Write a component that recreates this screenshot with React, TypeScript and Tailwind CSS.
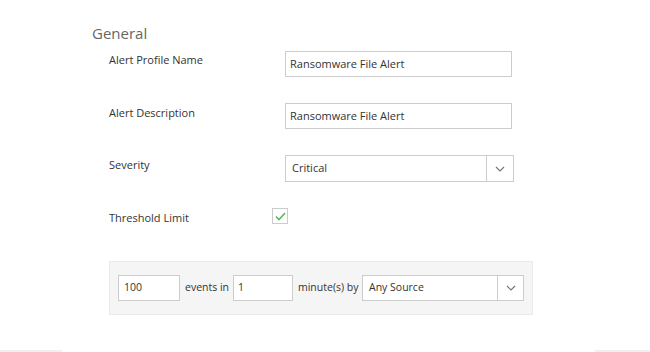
import React from "react";

const Chevron = () => (
  <svg width="10" height="6" viewBox="0 0 10 6" fill="none">
    <path d="M1 1l4 4 4-4" stroke="#777" strokeWidth="1.2" />
  </svg>
);

export default function App() {
  const font = { fontFamily: '"Open Sans", "Noto Sans", sans-serif' };
  return (
    <div className="w-[650px] h-[352px] bg-white relative overflow-hidden text-[#333]" style={font}>
      <div className="pt-[23px] pl-[92px]">
        <div className="text-[15px] leading-[20px] text-[#666]">General</div>
        <div className="pl-[17px] mt-[8px] flex flex-col gap-[26px]">
          <div className="flex items-start h-[26px]">
            <div className="w-[176px] text-[11px] leading-[14px] mt-[2px]">Alert Profile Name</div>
            <div className="w-[227px] h-[26px] border border-[#ccc] flex items-center px-[4px] text-[11px]">Ransomware File Alert</div>
          </div>
          <div className="flex items-start h-[26px]">
            <div className="w-[176px] text-[11px] leading-[14px] mt-[3px]">Alert Description</div>
            <div className="w-[227px] h-[26px] border border-[#ccc] flex items-center px-[4px] text-[11px]">Ransomware File Alert</div>
          </div>
          <div className="flex items-start h-[26px]">
            <div className="w-[176px] text-[11px] leading-[14px] mt-[3px]">Severity</div>
            <div className="w-[229px] h-[27px] border border-[#ccc] flex items-center text-[11px]">
              <div className="flex-1 px-[6px]">Critical</div>
              <div className="w-[27px] h-full border-l border-[#ccc] flex items-center justify-center"><Chevron /></div>
            </div>
          </div>
          <div className="flex items-start h-[26px]">
            <div className="w-[163px] text-[11px] leading-[14px] mt-[4px]">Threshold Limit</div>
            <div className="w-[16px] h-[16px] mt-[1px] border border-[#ccc] flex items-center justify-center">
              <svg width="11" height="9" viewBox="0 0 11 9" fill="none">
                <path d="M1 4.5l3 3L10 1" stroke="#5cb85c" strokeWidth="1.6" />
              </svg>
            </div>
          </div>
        </div>
        <div className="ml-[17px] mt-[28px] w-[424px] h-[54px] bg-[#f5f5f5] border border-[#ebebeb] flex items-center pl-[8px] text-[10.5px] whitespace-nowrap">
          <div className="shrink-0 w-[62px] h-[26px] bg-white border border-[#ccc] flex items-center px-[5px]">100</div>
          <div className="shrink-0 w-[53px] pl-[5px]">events in</div>
          <div className="shrink-0 w-[60px] h-[26px] bg-white border border-[#ccc] flex items-center px-[4px]">1</div>
          <div className="shrink-0 w-[69px] pl-[5px]">minute(s) by</div>
          <div className="shrink-0 w-[162px] h-[26px] bg-white border border-[#ccc] flex items-center">
            <div className="flex-1 px-[6px]">Any Source</div>
            <div className="w-[26px] h-full border-l border-[#ccc] flex items-center justify-center"><Chevron /></div>
          </div>
        </div>
      </div>
      <div className="absolute left-0 bottom-0 w-[62px] h-[2px] bg-[#f0f0f0]" />
      <div className="absolute right-0 bottom-0 w-[55px] h-[2px] bg-[#f0f0f0]" />
    </div>
  );
}
